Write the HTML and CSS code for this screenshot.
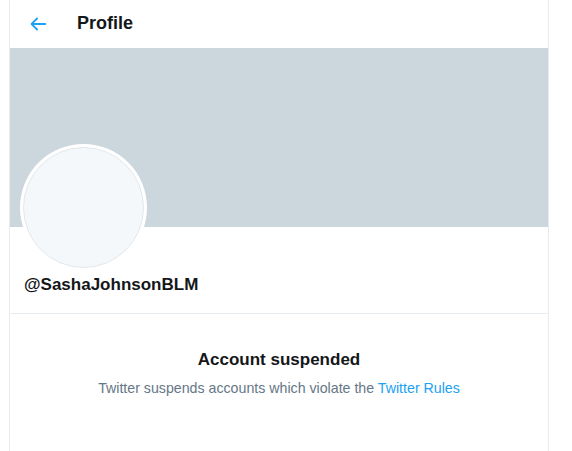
FILE: index.html
```html
<!DOCTYPE html>
<html lang="en">
<head>
    <meta charset="UTF-8">
    <meta name="viewport" content="width=device-width, initial-scale=1.0">
    <title>Profile</title>
    <link rel="stylesheet" href="styles.css">
</head>
<body>

<div class="profile-column">
    <div class="top-bar">
        <a href="#" class="back-button" aria-label="Back">
            <svg viewBox="0 0 24 24" width="22" height="22">
                <path d="M20 11H7.414l4.293-4.293a1 1 0 0 0-1.414-1.414l-6 6a1 1 0 0 0 0 1.414l6 6a1 1 0 0 0 1.414-1.414L7.414 13H20a1 1 0 1 0 0-2z"/>
            </svg>
        </a>
        <h2 class="top-title">Profile</h2>
    </div>

    <div class="profile-banner"></div>

    <div class="profile-info">
        <div class="profile-avatar"><div class="avatar-inner"></div></div>
        <div class="profile-handle">@SashaJohnsonBLM</div>
    </div>

    <div class="suspended-box">
        <h3 class="suspended-title">Account suspended</h3>
        <p class="suspended-text">Twitter suspends accounts which violate the <a href="#">Twitter Rules</a></p>
    </div>
</div>

</body>
</html>
```

FILE: styles.css
```css
body {
    font-family: 'Liberation Sans', Arial, sans-serif;
    margin: 0;
    padding: 0;
    background-color: #fff;
    color: #14171a;
}

.profile-column {
    width: 540px;
    min-height: 451px;
    margin-left: 9px;
    box-sizing: border-box;
    border-left: 1px solid #e6ecf0;
    border-right: 1px solid #e6ecf0;
}

.top-bar {
    display: flex;
    align-items: center;
    height: 48px;
    padding: 0 17px;
}

.back-button {
    display: flex;
    align-items: center;
    justify-content: center;
    width: 22px;
    height: 22px;
    margin-right: 28px;
    fill: #1da1f2;
}

.top-title {
    margin: 0 0 2px;
    font-size: 18px;
    font-weight: bold;
}

.profile-banner {
    height: 179px;
    background-color: #ccd6dd;
}

.profile-info {
    padding: 0 10px;
    border-bottom: 1px solid #e6ecf0;
}

.profile-avatar {
    width: 127px;
    height: 127px;
    margin-top: -83px;
    border-radius: 50%;
    background: #fff;
    padding: 3px;
    box-sizing: border-box;
}

.avatar-inner {
    width: 100%;
    height: 100%;
    border-radius: 50%;
    box-sizing: border-box;
    background-color: #f5f8fa;
    border: 1px solid #e1e8ed;
}

.profile-handle {
    padding: 4px 4px 18px;
    font-size: 17px;
    font-weight: bold;
    line-height: 20px;
}

.suspended-box {
    text-align: center;
    padding-top: 36px;
}

.suspended-title {
    margin: 0 0 10px;
    font-size: 17px;
    font-weight: bold;
    line-height: 20px;
}

.suspended-text {
    margin: 0;
    font-size: 14.2px;
    color: #657786;
}

.suspended-text a {
    color: #1da1f2;
    text-decoration: none;
}
```
